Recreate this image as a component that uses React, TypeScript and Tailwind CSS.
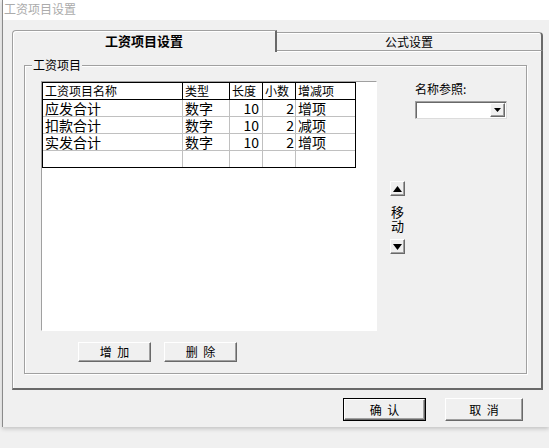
import React from "react";

const raised =
  "border border-t-white border-l-white border-r-[#696969] border-b-[#696969] shadow-[inset_-1px_-1px_0_#a0a0a0] bg-[#f0f0f0]";

function TriUp() {
  return (
    <svg width="9" height="6" viewBox="0 0 9 6">
      <polygon points="4.5,0 9,6 0,6" fill="#000" />
    </svg>
  );
}
function TriDown({ w = 9, h = 6 }: { w?: number; h?: number }) {
  return (
    <svg width={w} height={h} viewBox={`0 0 ${w} ${h}`}>
      <polygon points={`0,0 ${w},0 ${w / 2},${h}`} fill="#000" />
    </svg>
  );
}

const rows = [
  ["应发合计", "数字", "10", "2", "增项"],
  ["扣款合计", "数字", "10", "2", "减项"],
  ["实发合计", "数字", "10", "2", "增项"],
  ["", "", "", "", ""],
];

const widths = ["w-[140px]", "w-[47px]", "w-[33px]", "w-[33px]", "w-[59px]"];

function Grid() {
  const head = ["工资项目名称", "类型", "长度", "小数", "增减项"];
  return (
    <div className="w-[314px] border border-black bg-white">
      <div className="flex h-[17px] border-b border-black text-[12px] leading-[16px]">
        {head.map((h, i) => (
          <div
            key={i}
            className={`${widths[i]} h-[16px] pl-[2px] whitespace-nowrap ${i < 4 ? "border-r border-black" : ""}`}
          >
            {h}
          </div>
        ))}
      </div>
      {rows.map((r, ri) => (
        <div
          key={ri}
          className={`flex text-[14px] leading-[16px] ${ri < 3 ? "h-[17px] border-b border-[#c0c0c0]" : "h-[16px]"}`}
        >
          {r.map((c, i) => (
            <div
              key={i}
              className={`${widths[i]} h-[16px] whitespace-nowrap ${i < 4 ? "border-r border-[#c0c0c0]" : ""} ${
                i === 2 ? "text-right pr-[3px]" : i === 3 ? "text-right pr-[1px]" : "pl-[2px]"
              }`}
            >
              {c}
            </div>
          ))}
        </div>
      ))}
    </div>
  );
}

export default function App() {
  return (
    <div className="w-[549px] h-[448px] bg-[#f0f0f0] overflow-hidden font-['Noto_Sans_CJK_SC','Liberation_Sans',sans-serif] text-black">
      <div className="ml-[2px] w-[547px] h-[427px] border-l border-[#8a8a8a] shadow-[0_2px_4px_rgba(0,0,0,0.18)] flex flex-col">
        {/* title */}
        <div className="h-[20px] bg-white pl-[1px] text-[12px] leading-[18px] text-[#ababab]">
          工资项目设置
        </div>
        {/* body */}
        <div className="flex-1 bg-[#f0f0f0] pt-[10px]">
          <div className="ml-[9px] w-[531px]">
            {/* tabs */}
            <div className="flex items-end h-[20px]">
              <div className="relative z-10 w-[265px] h-[22px] -mb-[2px] bg-[#f0f0f0] border-t border-l border-t-[#a0a0a0] border-l-[#a0a0a0] border-r-2 border-r-[#696969] rounded-tl-[4px] shadow-[inset_1px_1px_0_#fff] flex items-center justify-center pb-[2px] font-bold text-[13px] leading-[16px]">
                工资项目设置
              </div>
              <div className="flex-1 h-[18px] border-t border-t-[#a0a0a0] border-r-2 border-r-[#696969] rounded-tr-[4px] shadow-[inset_0_1px_0_#fff] flex items-center justify-center text-[12px] leading-[16px]">
                公式设置
              </div>
            </div>
            {/* panel */}
            <div className="h-[340px] border-t border-l border-t-[#a0a0a0] border-l-[#a0a0a0] border-r-2 border-b-2 border-r-[#696969] border-b-[#696969] shadow-[inset_1px_1px_0_#fff] pt-[14px] pl-[11px]">
              {/* group box */}
              <div className="relative w-[503px] h-[309px] border border-[#a0a0a0] shadow-[1px_1px_0_#fff,inset_1px_1px_0_#fff] pt-[15px] pl-[16px]">
                <div className="absolute left-[7px] top-[-8px] bg-[#f0f0f0] px-[1px] text-[12px] leading-[14px]">
                  工资项目
                </div>
                <div className="flex">
                  {/* table frame */}
                  <div className="w-[336px] h-[250px] border border-t-[#a0a0a0] border-l-[#a0a0a0] border-r-white border-b-white bg-white">
                    <Grid />
                  </div>
                  {/* move column */}
                  <div className="ml-[13px] w-[15px] mt-[100px] flex flex-col items-center">
                    <div className={`w-[15px] h-[15px] ${raised} flex items-center justify-center`}>
                      <TriUp />
                    </div>
                    <div className="mt-[9px] w-[15px] text-[13px] leading-[14px] text-center">
                      <div>移</div>
                      <div>动</div>
                    </div>
                    <div className={`mt-[6px] w-[15px] h-[15px] ${raised} flex items-center justify-center`}>
                      <TriDown />
                    </div>
                  </div>
                  {/* name ref */}
                  <div className="ml-[10px] mt-[1px]">
                    <div className="text-[12px] leading-[14px]">名称参照:</div>
                    <div className="mt-[5px] w-[92px] h-[18px] border border-t-[#a0a0a0] border-l-[#a0a0a0] border-r-[#dcdcdc] border-b-[#dcdcdc] shadow-[inset_1px_1px_0_#696969] bg-white flex justify-end items-center pr-[1px]">
                      <div className={`w-[15px] h-[14px] ${raised} flex items-center justify-center`}>
                        <TriDown w={7} h={4} />
                      </div>
                    </div>
                  </div>
                </div>
                {/* add/delete */}
                <div className="flex gap-[13px] ml-[37px] mt-[11px]">
                  <button className={`w-[73px] h-[20px] ${raised} text-[12px] leading-[14px] whitespace-pre [word-spacing:3px]`}>
                    增 加
                  </button>
                  <button className={`w-[73px] h-[20px] ${raised} text-[12px] leading-[14px] whitespace-pre [word-spacing:3px]`}>
                    删 除
                  </button>
                </div>
              </div>
            </div>
            {/* bottom buttons */}
            <div className="flex justify-end gap-[19px] pr-[20px] mt-[8px]">
              <button className="w-[83px] h-[23px] border border-black">
                <div className={`w-full h-full ${raised} text-[12px] leading-[14px] whitespace-pre [word-spacing:3px] flex items-center justify-center`}>
                  确 认
                </div>
              </button>
              <button className={`w-[78px] h-[23px] ${raised} text-[12px] leading-[14px] whitespace-pre [word-spacing:3px]`}>
                取 消
              </button>
            </div>
          </div>
        </div>
      </div>
    </div>
  );
}
